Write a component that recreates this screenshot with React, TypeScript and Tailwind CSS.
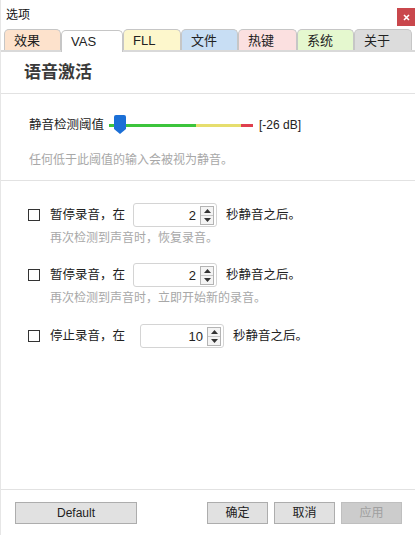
import React from "react";

const tabs = [
  { label: "效果", w: "w-[57px]", bg: "bg-[#fde2cc]" },
  { label: "VAS", w: "w-[62px]", bg: "bg-white", active: true },
  { label: "FLL", w: "w-[58px]", bg: "bg-[#fdf7cc]" },
  { label: "文件", w: "w-[57px]", bg: "bg-[#c8def4]" },
  { label: "热键", w: "w-[59px]", bg: "bg-[#fbe0e0]" },
  { label: "系统", w: "w-[57px]", bg: "bg-[#e5f8cf]" },
  { label: "关于", w: "w-[58px]", bg: "bg-[#dcdcdc]" },
];

function SpinBox({ value, w }: { value: number; w: string }) {
  return (
    <div className={`${w} h-[24px] flex items-center justify-end border border-[#d4d4d4] rounded-[3px] bg-white pr-[2px]`}>
      <span className="text-[13px] text-[#222] leading-none mr-[4px]">{value}</span>
      <div className="w-[14px] h-[19px] flex flex-col border border-[#b4b4b4] bg-[#f4f4f4]">
        <div className="flex-1 flex items-center justify-center border-b border-[#c8c8c8]">
          <svg width="7" height="4" viewBox="0 0 7 4"><polygon points="3.5,0 7,4 0,4" fill="#333" /></svg>
        </div>
        <div className="flex-1 flex items-center justify-center">
          <svg width="7" height="4" viewBox="0 0 7 4"><polygon points="0,0 7,0 3.5,4" fill="#333" /></svg>
        </div>
      </div>
    </div>
  );
}

function CheckRow({ label, value, gap, hint }: { label: string; value: number; gap: string; hint?: string }) {
  return (
    <div className="pl-[27px]">
      <div className="flex items-center h-[24px]">
        <div className="w-[12px] h-[12px] border border-[#333] bg-white" />
        <span className="ml-[10px] text-[12.5px] text-[#222] leading-none">{label}</span>
        <div className={gap}>
          <SpinBox value={value} w="w-[84px]" />
        </div>
        <span className="ml-[9px] text-[12.5px] text-[#222] leading-none">秒静音之后。</span>
      </div>
      {hint && (
        <div className="pl-[22px] mt-[3px] text-[12px] text-[#a8a8a8] leading-[16px]">{hint}</div>
      )}
    </div>
  );
}

export default function App() {
  return (
    <div className="w-[415px] h-[535px] bg-white flex flex-col font-['Liberation_Sans','Noto_Sans_CJK_SC',sans-serif] text-[#222] overflow-hidden border-l border-[#e6e6e6]">
      {/* title bar */}
      <div className="h-[30px] flex items-start justify-between pl-[5px]">
        <span className="mt-[6px] text-[12px] leading-[18px] text-[#111]">选项</span>
        <div className="mt-[8px] w-[18px] h-[18px] bg-[#c9474c] flex items-center justify-center">
          <svg width="7" height="7" viewBox="0 0 7 7">
            <path d="M1 1 L6 6 M6 1 L1 6" stroke="#fff" strokeWidth="1.6" />
          </svg>
        </div>
      </div>

      {/* tabs */}
      <div className="h-[22px] flex items-end pl-[3px] border-b-2 border-[#d9d9d9]">
        {tabs.map((t) => (
          <div
            key={t.label}
            className={`${t.w} ${t.bg} ${t.active ? "h-[22px] -mb-[2px]" : "h-[21px]"} flex items-center pl-[9px] border border-b-0 border-[#c6c6c6] rounded-t-[5px] text-[13px] leading-none text-[#222]`}
          >
            {t.label}
          </div>
        ))}
      </div>

      {/* header */}
      <div className="h-[42px] flex items-center pl-[23px] border-b border-[#e2e2e2]">
        <span className="text-[17px] font-bold text-[#3a3a3a] leading-none">语音激活</span>
      </div>

      {/* threshold */}
      <div className="h-[87px] border-b border-[#e2e2e2] pl-[28px] pt-[21px]">
        <div className="flex items-center h-[20px]">
          <span className="text-[12.5px] leading-none text-[#222]">静音检测阈值</span>
          <div className="relative ml-[5px] w-[144px] h-[20px] flex items-center">
            <div className="flex h-[3px] w-full">
              <div className="w-[87px] bg-[#3cc43c]" />
              <div className="w-[45px] bg-[#e6de6e]" />
              <div className="flex-1 bg-[#df3f4e]" />
            </div>
            <svg className="absolute left-[5px] top-[0px]" width="12" height="19" viewBox="0 0 12 19">
              <path d="M2 0 H10 Q12 0 12 2 V14 L6 19 L0 14 V2 Q0 0 2 0 Z" fill="#1b6fd6" />
            </svg>
          </div>
          <span className="ml-[6px] text-[12px] leading-none text-[#222]">[-26 dB]</span>
        </div>
        <div className="mt-[17px] text-[12px] leading-[16px] text-[#a8a8a8]">任何低于此阈值的输入会被视为静音。</div>
      </div>

      {/* options */}
      <div className="flex-1 pt-[22px] flex flex-col">
        <CheckRow label="暂停录音，在" value={2} gap="ml-[8px]" hint="再次检测到声音时，恢复录音。" />
        <div className="mt-[17px]">
          <CheckRow label="暂停录音，在" value={2} gap="ml-[8px]" hint="再次检测到声音时，立即开始新的录音。" />
        </div>
        <div className="mt-[18px]">
          <CheckRow label="停止录音，在" value={10} gap="ml-[15px]" />
        </div>
      </div>

      {/* footer */}
      <div className="h-[46px] border-t border-[#e2e2e2] flex items-start pt-[12px] pl-[14px] pr-[13px]">
        <button className="w-[122px] h-[22px] bg-[#e1e1e1] border border-[#adadad] text-[12px] leading-none text-[#222]">Default</button>
        <div className="flex-1" />
        <button className="w-[61px] h-[22px] bg-[#e1e1e1] border border-[#adadad] text-[12px] leading-none text-[#222]">确定</button>
        <button className="ml-[6px] w-[61px] h-[22px] bg-[#e1e1e1] border border-[#adadad] text-[12px] leading-none text-[#222]">取消</button>
        <button className="ml-[6px] w-[61px] h-[22px] bg-[#cccccc] border border-[#bfbfbf] text-[12px] leading-none text-[#a0a0a0]">应用</button>
      </div>
    </div>
  );
}
